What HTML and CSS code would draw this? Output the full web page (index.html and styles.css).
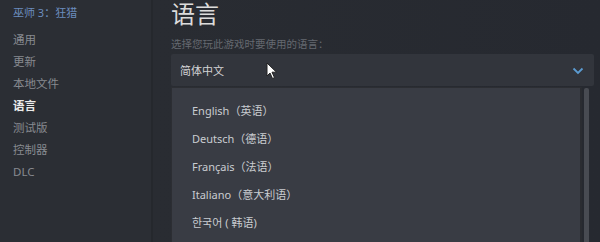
FILE: index.html
```html
<!DOCTYPE html>
<html lang="zh-CN">
<head>
    <meta charset="UTF-8">
    <title>属性 - 语言</title>
    <link rel="stylesheet" href="styles.css">
</head>
<body>
    <div class="app">
        <div class="sidebar">
            <div class="game-title">巫师 3：狂猎</div>
            <ul class="menu">
                <li>通用</li>
                <li>更新</li>
                <li>本地文件</li>
                <li class="active">语言</li>
                <li>测试版</li>
                <li>控制器</li>
                <li>DLC</li>
            </ul>
        </div>
        <div class="main">
            <h1>语言</h1>
            <p class="hint">选择您玩此游戏时要使用的语言：</p>
            <div class="select">
                <span>简体中文</span>
                <svg class="chevron" width="12" height="8" viewBox="0 0 12 8">
                    <path d="M1.5 1.5 L6 6 L10.5 1.5" fill="none" stroke="#5b9bd1" stroke-width="1.8"/>
                </svg>
            </div>
            <div class="dropdown">
                <ul class="options">
                    <li>English（英语）</li>
                    <li>Deutsch（德语）</li>
                    <li>Français（法语）</li>
                    <li>Italiano（意大利语）</li>
                    <li>한국어 ( 韩语)</li>
                </ul>
                <div class="scrollbar"></div>
            </div>
            <svg class="cursor" width="12" height="18" viewBox="0 0 12 18">
                <path d="M1 1 L1 14 L4 11 L6.5 16.5 L8.5 15.6 L6 10.2 L10.5 10.2 Z" fill="#fff" stroke="#222" stroke-width="1"/>
            </svg>
        </div>
    </div>
</body>
</html>
```

FILE: styles.css
```css
html, body {
    margin: 0;
    padding: 0;
    height: 100%;
    background-color: #282b31;
    font-family: "Noto Sans", "Noto Sans CJK SC", sans-serif;
    overflow: hidden;
}
.app {
    display: flex;
    height: 242px;
}
.sidebar {
    width: 153px;
    background-color: #2b2e34;
    border-right: 2px solid #25282d;
    padding: 5px 0 0 13px;
    box-sizing: border-box;
}
.game-title {
    color: #6c8dbf;
    font-size: 11px;
    line-height: 16px;
}
.menu {
    list-style: none;
    margin: 8px 0 0;
    padding: 0;
}
.menu li {
    color: #878a90;
    font-size: 11.5px;
    line-height: 22px;
}
.menu li.active {
    color: #ebebeb;
    font-weight: bold;
}
.main {
    position: relative;
    flex: 1;
    padding: 0 6px 0 18px;
    background: linear-gradient(to right, #292c32, #262930);
}
h1 {
    margin: 0;
    color: #dcdcdc;
    font-size: 24px;
    font-weight: normal;
    line-height: 28px;
}
.hint {
    margin: 9px 0 0;
    color: #656970;
    font-size: 10.5px;
    line-height: 14px;
}
.select {
    margin-top: 3px;
    height: 32px;
    background-color: #32353c;
    border-radius: 2px;
    display: flex;
    align-items: center;
    justify-content: space-between;
    padding: 0 10px 0 9px;
    color: #d2d3d5;
    font-size: 11px;
}
.chevron {
    margin-top: 1px;
}
.dropdown {
    display: flex;
    margin-top: 1px;
    height: 160px;
}
.options {
    list-style: none;
    margin: 0;
    padding: 9px 0 0 20px;
    width: 411px;
    box-sizing: border-box;
    background-color: #393c44;
    border: 1px solid #2c2e33;
    border-right: 2px solid #2a2c31;
}
.options li {
    color: #c9ccd1;
    font-size: 11px;
    line-height: 28px;
}
.scrollbar {
    width: 5px;
    margin: 1px 0 0 2px;
    background-color: #484b52;
    border-radius: 2px;
}
.cursor {
    position: absolute;
    left: 113px;
    top: 62px;
}
```
